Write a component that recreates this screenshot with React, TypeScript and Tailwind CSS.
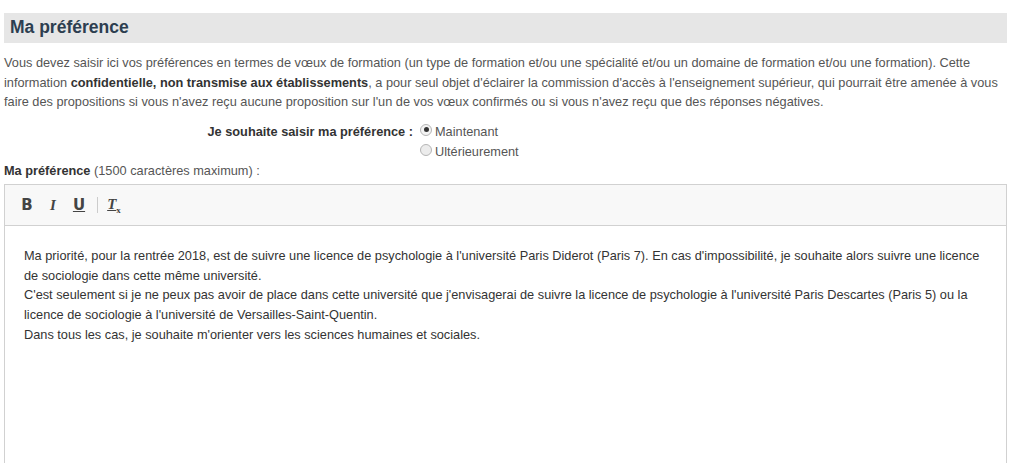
export default function App() {
  return (
    <div className="min-h-[463px] bg-white pl-[4px] pt-[13px] text-[12.75px] text-[#555]" style={{ fontFamily: '"Liberation Sans", Arial, sans-serif' }}>
      <div className="w-[1003px]">
        <div className="h-[30px] bg-[#e6e6e6] pl-[6px] flex items-center">
          <h2 className="text-[17.5px] font-bold text-[#2d3e50] leading-none">Ma préférence</h2>
        </div>
        <p className="mt-[10px] leading-[19.6px] pr-[8px]">
          Vous devez saisir ici vos préférences en termes de vœux de formation (un type de formation et/ou une spécialité et/ou un domaine de formation et/ou une formation). Cette information <strong className="text-[#333]">confidentielle, non transmise aux établissements</strong>, a pour seul objet d'éclairer la commission d'accès à l'enseignement supérieur, qui pourrait être amenée à vous faire des propositions si vous n'avez reçu aucune proposition sur l'un de vos vœux confirmés ou si vous n'avez reçu que des réponses négatives.
        </p>
        <div className="mt-[10px] flex">
          <div className="w-[412px] text-right font-bold text-[#333] pr-[3px] leading-[20px]">Je souhaite saisir ma préférence :</div>
          <div className="ml-[4px] flex flex-col">
            <label className="flex items-center h-[20px] gap-[3px]">
              <span className="w-[12px] h-[12px] rounded-full border border-[#b5b5b5] bg-[#f3f3f3] flex items-center justify-center -mt-[4px]">
                <span className="w-[5px] h-[5px] rounded-full bg-[#333]" />
              </span>
              <span>Maintenant</span>
            </label>
            <label className="flex items-center h-[20px] gap-[3px]">
              <span className="w-[12px] h-[12px] rounded-full border border-[#b5b5b5] bg-[#ececec] -mt-[4px]" />
              <span>Ultérieurement</span>
            </label>
          </div>
        </div>
        <div className="mt-[-1px] leading-[20px]">
          <strong className="text-[#333]">Ma préférence</strong> (1500 caractères maximum) :
        </div>
        <div className="mt-[3px] border border-[#d1d1d1] h-[300px]">
          <div className="h-[41px] bg-[#f8f8f8] border-b border-[#d1d1d1] flex items-center pl-[9px] text-[#444]">
            <span className="font-bold text-[15px] w-[26px] text-center" style={{ fontFamily: '"DejaVu Sans", sans-serif' }}>B</span>
            <span className="italic font-bold text-[15px] w-[26px] text-center" style={{ fontFamily: '"Liberation Serif", serif' }}>I</span>
            <span className="underline font-bold text-[15px] w-[26px] text-center" style={{ fontFamily: '"DejaVu Sans", sans-serif' }}>U</span>
            <span className="w-px h-[16px] bg-[#ccc] mx-[5px]" />
            <span className="italic font-bold text-[15px] w-[22px] text-center underline" style={{ fontFamily: '"Liberation Serif", serif' }}>
              T<span className="text-[9px] not-italic align-sub">x</span>
            </span>
          </div>
          <div className="pl-[19px] pr-[24px] pt-[20px] leading-[19.8px] text-[12.75px] text-[#333]">
            <div>Ma priorité, pour la rentrée 2018, est de suivre une licence de psychologie à l'université Paris Diderot (Paris 7). En cas d'impossibilité, je souhaite alors suivre une licence de sociologie dans cette même université.</div>
            <div>C'est seulement si je ne peux pas avoir de place dans cette université que j'envisagerai de suivre la licence de psychologie à l'université Paris Descartes (Paris 5) ou la licence de sociologie à l'université de Versailles-Saint-Quentin.</div>
            <div>Dans tous les cas, je souhaite m'orienter vers les sciences humaines et sociales.</div>
          </div>
        </div>
      </div>
    </div>
  );
}
